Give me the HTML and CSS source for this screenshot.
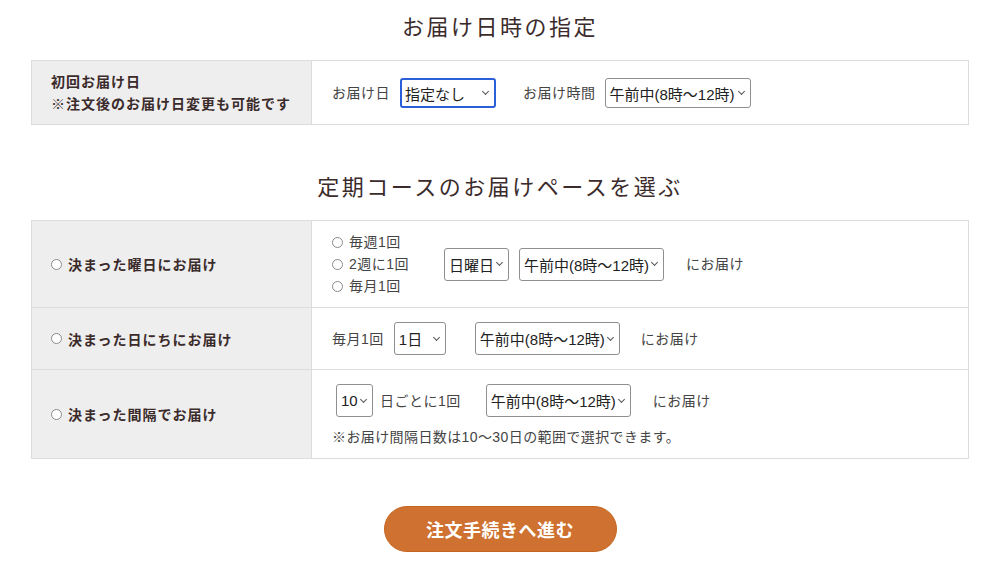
FILE: index.html
```html
<!DOCTYPE html>
<html lang="ja">
<head>
<meta charset="utf-8">
<title>お届け日時の指定</title>
<link rel="stylesheet" href="styles.css">
</head>
<body>
<main class="page">
  <h2 class="heading heading-first">お届け日時の指定</h2>
  <div class="table">
    <div class="row row-first">
      <div class="label label-multi">初回お届け日<br>※注文後のお届け日変更も可能です</div>
      <div class="cell">
        <span class="txt">お届け日</span>
        <span class="sel sel-focus w-date ml10"><span class="sel-text">指定なし</span></span>
        <span class="txt ml27">お届け時間</span>
        <span class="sel w-time1 ml9"><span class="sel-text">午前中(8時〜12時)</span></span>
      </div>
    </div>
  </div>

  <h2 class="heading heading-second">定期コースのお届けペースを選ぶ</h2>
  <div class="table">
    <div class="row row-week">
      <div class="label"><span class="radio"></span>決まった曜日にお届け</div>
      <div class="cell">
        <div class="radios">
          <div class="radio-line"><span class="radio"></span>毎週1回</div>
          <div class="radio-line"><span class="radio"></span>2週に1回</div>
          <div class="radio-line"><span class="radio"></span>毎月1回</div>
        </div>
        <span class="sel tall w-day ml40"><span class="sel-text">日曜日</span></span>
        <span class="sel tall w-time ml10"><span class="sel-text">午前中(8時〜12時)</span></span>
        <span class="txt ml22">にお届け</span>
      </div>
    </div>
    <div class="row row-month">
      <div class="label"><span class="radio"></span>決まった日にちにお届け</div>
      <div class="cell">
        <span class="txt">毎月1回</span>
        <span class="sel tall w-one ml10"><span class="sel-text">1日</span></span>
        <span class="sel tall w-time ml29"><span class="sel-text">午前中(8時〜12時)</span></span>
        <span class="txt ml21">にお届け</span>
      </div>
    </div>
    <div class="row row-interval">
      <div class="label"><span class="radio"></span>決まった間隔でお届け</div>
      <div class="cell cell-col">
        <div class="line">
          <span class="sel tall w-ten"><span class="sel-text">10</span></span>
          <span class="txt ml7">日ごとに1回</span>
          <span class="sel tall w-time ml25"><span class="sel-text">午前中(8時〜12時)</span></span>
          <span class="txt ml22">にお届け</span>
        </div>
        <p class="note">※お届け間隔日数は10〜30日の範囲で選択できます。</p>
      </div>
    </div>
  </div>

  <div class="actions">
    <button class="submit" type="button">注文手続きへ進む</button>
  </div>
</main>
</body>
</html>
```

FILE: styles.css
```css
* { box-sizing: border-box; }

body {
  margin: 0;
  background: #fff;
  font-family: "Noto Sans CJK JP", "Noto Sans", sans-serif;
  color: #3b2b2b;
}

.page {
  width: 938px;
  margin: 0 auto;
}

.heading {
  margin: 0;
  text-align: center;
  font-size: 22px;
  font-weight: 400;
  line-height: 36px;
  letter-spacing: 2.5px;
  color: #3b2b2b;
}

.heading-first { margin-top: 7px; margin-bottom: 17px; }
.heading-second { margin-top: 42px; margin-bottom: 17px; }

.table {
  border: 1px solid #dcdcdc;
}

.row {
  display: grid;
  grid-template-columns: 280px 1fr;
}

.row + .row { border-top: 1px solid #dcdcdc; }

.label {
  background: #eeeeee;
  border-right: 1px solid #dcdcdc;
  display: flex;
  align-items: center;
  padding-left: 19px;
  font-size: 14px;
  font-weight: 700;
  letter-spacing: 1px;
  line-height: 22px;
  color: #3b2b2b;
}

.label-multi {
  display: block;
  padding-top: 9px;
  padding-bottom: 10px;
}

.label .radio { margin-right: 6px; }

.cell {
  display: flex;
  align-items: center;
  padding-left: 20px;
  font-family: "Liberation Sans", "Noto Sans CJK JP", sans-serif;
  font-size: 14px;
  letter-spacing: 0.5px;
  color: #444;
}

.row-first .cell { padding-top: 1px; }
.row-week .cell { padding-top: 10px; padding-bottom: 10px; }
.row-month .cell { padding-top: 14px; padding-bottom: 14px; }
.row-interval .cell { padding-top: 14px; padding-bottom: 10px; padding-left: 24px; }

.cell-col {
  flex-direction: column;
  align-items: flex-start;
}

.line {
  display: flex;
  align-items: center;
}

.note {
  margin: 9px 0 0 -4px;
  line-height: 22px;
  font-size: 14px;
  letter-spacing: 0.4px;
}

.txt { white-space: nowrap; line-height: 22px; }

.radios {
  display: flex;
  flex-direction: column;
  width: 72px;
  flex: none;
}
.radio-line {
  display: flex;
  align-items: center;
  line-height: 22px;
  white-space: nowrap;
}
.radio-line .radio { margin-right: 6px; }

.radio {
  display: inline-block;
  width: 11px;
  height: 11px;
  border: 1px solid #8a8a8a;
  border-radius: 50%;
  background: #fff;
  flex: none;
}

.sel {
  position: relative;
  display: inline-flex;
  align-items: center;
  height: 30px;
  padding-left: 4px;
  border: 1px solid #8f8f8f;
  border-radius: 3px;
  background: #fff;
  font-family: "Liberation Sans", "Noto Sans CJK JP", sans-serif;
  font-size: 15px;
  letter-spacing: 0;
  color: #222;
  white-space: nowrap;
  flex: none;
}

.sel::after {
  content: "";
  position: absolute;
  right: 6px;
  top: 50%;
  width: 4px;
  height: 4px;
  margin-top: -4px;
  border-right: 1px solid #555;
  border-bottom: 1px solid #555;
  transform: rotate(45deg);
}

.sel-focus {
  border: 2px solid #2b5fd9;
  padding-left: 3px;
}

.tall { height: 33px; }

.w-date { width: 96px; }
.w-time1 { width: 146px; }
.w-time { width: 145px; }
.w-day { width: 65px; }
.w-one { width: 52px; }
.w-ten { width: 37px; }

.ml7 { margin-left: 7px; }
.ml9 { margin-left: 9px; }
.ml10 { margin-left: 10px; }
.ml21 { margin-left: 21px; }
.ml22 { margin-left: 22px; }
.ml25 { margin-left: 25px; }
.ml27 { margin-left: 27px; }
.ml29 { margin-left: 29px; }
.ml40 { margin-left: 40px; }

.actions {
  display: flex;
  justify-content: center;
  margin-top: 47px;
}

.submit {
  width: 233px;
  height: 46px;
  border: 1px solid #c4661f;
  border-radius: 23px;
  background: #cf7130;
  color: #fff;
  font-family: "Noto Sans CJK JP", sans-serif;
  font-size: 18px;
  font-weight: 700;
  letter-spacing: 0.5px;
  cursor: pointer;
}
```
